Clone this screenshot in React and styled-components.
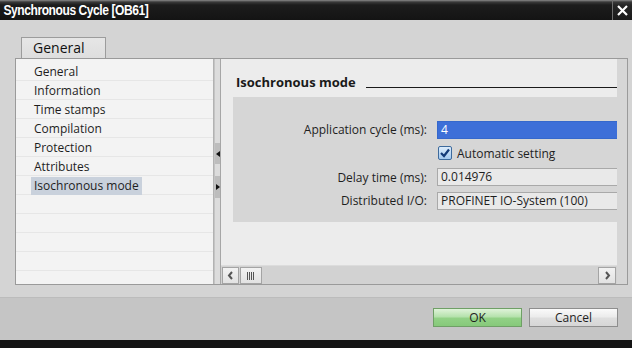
import React from "react";
import styled, { createGlobalStyle } from "styled-components";

const Global = createGlobalStyle`
  html, body { margin: 0; padding: 0; background: #111; }
  body { font-family: "Open Sans", "Liberation Sans", sans-serif; }
  * { box-sizing: border-box; }
`;

const Window = styled.div`
  width: 632px;
  height: 348px;
  display: flex;
  flex-direction: column;
  background: #d4d4d4;
  overflow: hidden;
`;

const TitleBar = styled.div`
  height: 20px;
  flex: none;
  display: flex;
  align-items: stretch;
  background: linear-gradient(#8a8a8a 0px, #3a3a3a 2px, #1c1c1c 5px, #141414 100%);
`;

const Title = styled.div`
  flex: 1;
  padding-left: 4px;
  color: #fff;
  font-family: "Liberation Sans", Arial, sans-serif;
  font-weight: bold;
  font-size: 14px;
  letter-spacing: -0.5px;
  line-height: 21px;
  white-space: nowrap;
  transform: scaleX(0.86);
  transform-origin: left center;
`;

const CloseBtn = styled.div`
  width: 20px;
  display: flex;
  align-items: center;
  justify-content: center;
  border-left: 1px solid #6e6e6e;
  background: linear-gradient(#8a8a8a 0px, #3a3a3a 2px, #262626 5px, #1a1a1a 100%);
`;

const Main = styled.div`
  height: 277px;
  flex: none;
  padding: 17px 4px 0 15px;
  display: flex;
  flex-direction: column;
`;

const Tab = styled.div`
  margin-left: 6px;
  width: 85px;
  height: 21px;
  padding-left: 11px;
  background: linear-gradient(#e6e6e6, #dedede);
  border: 1px solid #9c9c9c;
  border-bottom: none;
  font-size: 14px;
  line-height: 20px;
  color: #111;
`;

const Frame = styled.div`
  height: 227px;
  display: flex;
  border: 1px solid #9a9a9a;
  background: #d6d6d6;
`;

const List = styled.div`
  width: 198px;
  padding-top: 3px;
  background: #f3f3f3;
  border-right: 1px solid #b2b2b2;
  overflow: hidden;
`;

const Row = styled.div`
  height: 19px;
  padding: 1px 0 0 15px;
  display: flex;
  align-items: center;
  border-bottom: 1px solid #e6e6e6;
`;

const Item = styled.span`
  padding: 0 3px;
  height: 18px;
  line-height: 18px;
  font-size: 12px;
  color: #1e1e1e;
  background: ${(p) => (p.$selected ? "#c9d1dc" : "transparent")};
`;

const Splitter = styled.div`
  width: 7px;
  display: flex;
  flex-direction: column;
  background: #dcdcdc;
  border-left: 1px solid #c4c4c4;
  border-right: 1px solid #a6a6a6;
  padding-top: 84px;
`;

const SplitBtn = styled.div`
  height: ${(p) => p.$h}px;
  margin-bottom: ${(p) => p.$mb}px;
  background: #bdbdbd;
  display: flex;
  align-items: center;
  justify-content: center;
`;

const Right = styled.div`
  width: 396px;
  display: flex;
  flex-direction: column;
  background: #ececec;
  overflow: hidden;
`;

const HeadingRow = styled.div`
  height: 38px;
  padding: 14px 0 0 15px;
  display: flex;
  align-items: flex-start;
`;

const Heading = styled.div`
  font-size: 13px;
  font-weight: bold;
  line-height: 18px;
  color: #1a1a1a;
  white-space: nowrap;
`;

const Rule = styled.div`
  flex: 1;
  height: 1px;
  margin: 14px 0 0 10px;
  background: #1a1a1a;
`;

const Section = styled.div`
  margin-left: 12px;
  height: 125px;
  padding-top: 21px;
  background: #d6d6d6;
  display: grid;
  grid-template-columns: 194px 200px;
  grid-template-rows: 23px 24px 24px 23px;
  column-gap: 10px;
  align-items: center;
`;

const Label = styled.div`
  text-align: right;
  font-size: 12px;
  color: #1e1e1e;
  white-space: nowrap;
`;

const Field = styled.div`
  height: 18px;
  padding-left: 3px;
  font-size: 12px;
  line-height: 16px;
  white-space: nowrap;
  border: 1px solid ${(p) => (p.$active ? "#3568cc" : "#a9a9a9")};
  background: ${(p) => (p.$active ? "#3d6fd8" : "#e9e9e9")};
  color: ${(p) => (p.$active ? "#fff" : "#1e1e1e")};
`;

const CheckLine = styled.label`
  grid-column: 2;
  display: flex;
  align-items: center;
  gap: 5px;
  font-size: 12px;
  color: #1e1e1e;
  padding-left: 1px;
`;

const Spacer = styled.div`
  flex: 1;
`;

const ScrollBar = styled.div`
  height: 19px;
  padding: 1px;
  display: flex;
  gap: 1px;
  background: #d2d2d2;
  border-top: 1px solid #dcdcdc;
`;

const ScrollBtn = styled.div`
  width: ${(p) => p.$w}px;
  height: 17px;
  display: flex;
  align-items: center;
  justify-content: center;
  background: linear-gradient(#f2f2f2, #e2e2e2);
  border: 1px solid #a4a4a4;
`;

const Filler = styled.div`
  width: 10px;
  background: #d6d6d6;
`;

const Footer = styled.div`
  height: 43px;
  flex: none;
  background: #c5c5c5;
  border-top: 1px solid #bcbcbc;
  padding: 10px 14px 0 0;
  display: flex;
  justify-content: flex-end;
  gap: 7px;
`;

const Button = styled.div`
  width: 89px;
  height: 19px;
  display: flex;
  align-items: center;
  justify-content: center;
  font-size: 12px;
  color: #1e1e1e;
  border: 1px solid ${(p) => (p.$primary ? "#6f9f66" : "#8e8e8e")};
  background: ${(p) =>
    p.$primary
      ? "linear-gradient(#dff3d9 0%, #b6e2ad 45%, #92d186 55%, #86c97a 100%)"
      : "linear-gradient(#fafafa 0%, #ececec 45%, #dedede 55%, #d6d6d6 100%)"};
`;

const BottomBar = styled.div`
  flex: 1;
  background: #141414;
`;

const items = [
  "General",
  "Information",
  "Time stamps",
  "Compilation",
  "Protection",
  "Attributes",
  "Isochronous mode",
  "",
  "",
  "",
  "",
  "",
];

const Tri = ({ dir }) => (
  <svg width="4" height="6" viewBox="0 0 4 6">
    {dir === "left" ? (
      <polygon points="4,0 4,6 0,3" fill="#111" />
    ) : (
      <polygon points="0,0 0,6 4,3" fill="#111" />
    )}
  </svg>
);

const Chevron = ({ dir }) => (
  <svg width="7" height="9" viewBox="0 0 7 9">
    <polyline
      points={dir === "left" ? "5,1 2,4.5 5,8" : "2,1 5,4.5 2,8"}
      fill="none"
      stroke="#555"
      strokeWidth="2"
    />
  </svg>
);

const Grip = () => (
  <svg width="8" height="8" viewBox="0 0 8 8">
    {[0.5, 2.5, 4.5, 6.5].map((x) => (
      <line key={x} x1={x} y1="0" x2={x} y2="8" stroke="#555" strokeWidth="1" />
    ))}
  </svg>
);

const Check = () => (
  <svg width="14" height="14" viewBox="0 0 14 14">
    <defs>
      <linearGradient id="cb" x1="0" y1="0" x2="0" y2="1">
        <stop offset="0" stopColor="#dfeefc" />
        <stop offset="1" stopColor="#9fc6ee" />
      </linearGradient>
    </defs>
    <rect x="0.5" y="0.5" width="13" height="13" rx="1.5" fill="url(#cb)" stroke="#3d6a9c" />
    <polyline points="3,7 6,10 11,3.5" fill="none" stroke="#133a78" strokeWidth="2.2" />
  </svg>
);

export default function App() {
  return (
    <>
      <Global />
      <Window>
        <TitleBar>
          <Title>Synchronous Cycle [OB61]</Title>
          <CloseBtn>
            <svg width="11" height="11" viewBox="0 0 11 11">
              <path d="M1 1 L10 10 M10 1 L1 10" stroke="#fff" strokeWidth="2.2" />
            </svg>
          </CloseBtn>
        </TitleBar>
        <Main>
          <Tab>General</Tab>
          <Frame>
            <List>
              {items.map((t, i) => (
                <Row key={i}>
                  {t && <Item $selected={t === "Isochronous mode"}>{t}</Item>}
                </Row>
              ))}
            </List>
            <Splitter>
              <SplitBtn $h={21} $mb={12}>
                <Tri dir="left" />
              </SplitBtn>
              <SplitBtn $h={22} $mb={0}>
                <Tri dir="right" />
              </SplitBtn>
            </Splitter>
            <Right>
              <HeadingRow>
                <Heading>Isochronous mode</Heading>
                <Rule />
              </HeadingRow>
              <Section>
                <Label>Application cycle (ms):</Label>
                <Field $active>4</Field>
                <CheckLine>
                  <Check />
                  Automatic setting
                </CheckLine>
                <Label>Delay time (ms):</Label>
                <Field>0.014976</Field>
                <Label>Distributed I/O:</Label>
                <Field>PROFINET IO-System (100)</Field>
              </Section>
              <Spacer />
              <ScrollBar>
                <ScrollBtn $w={17}>
                  <Chevron dir="left" />
                </ScrollBtn>
                <ScrollBtn $w={22}>
                  <Grip />
                </ScrollBtn>
                <Spacer />
                <ScrollBtn $w={18}>
                  <Chevron dir="right" />
                </ScrollBtn>
              </ScrollBar>
            </Right>
            <Filler />
          </Frame>
        </Main>
        <Footer>
          <Button $primary>OK</Button>
          <Button>Cancel</Button>
        </Footer>
        <BottomBar />
      </Window>
    </>
  );
}
